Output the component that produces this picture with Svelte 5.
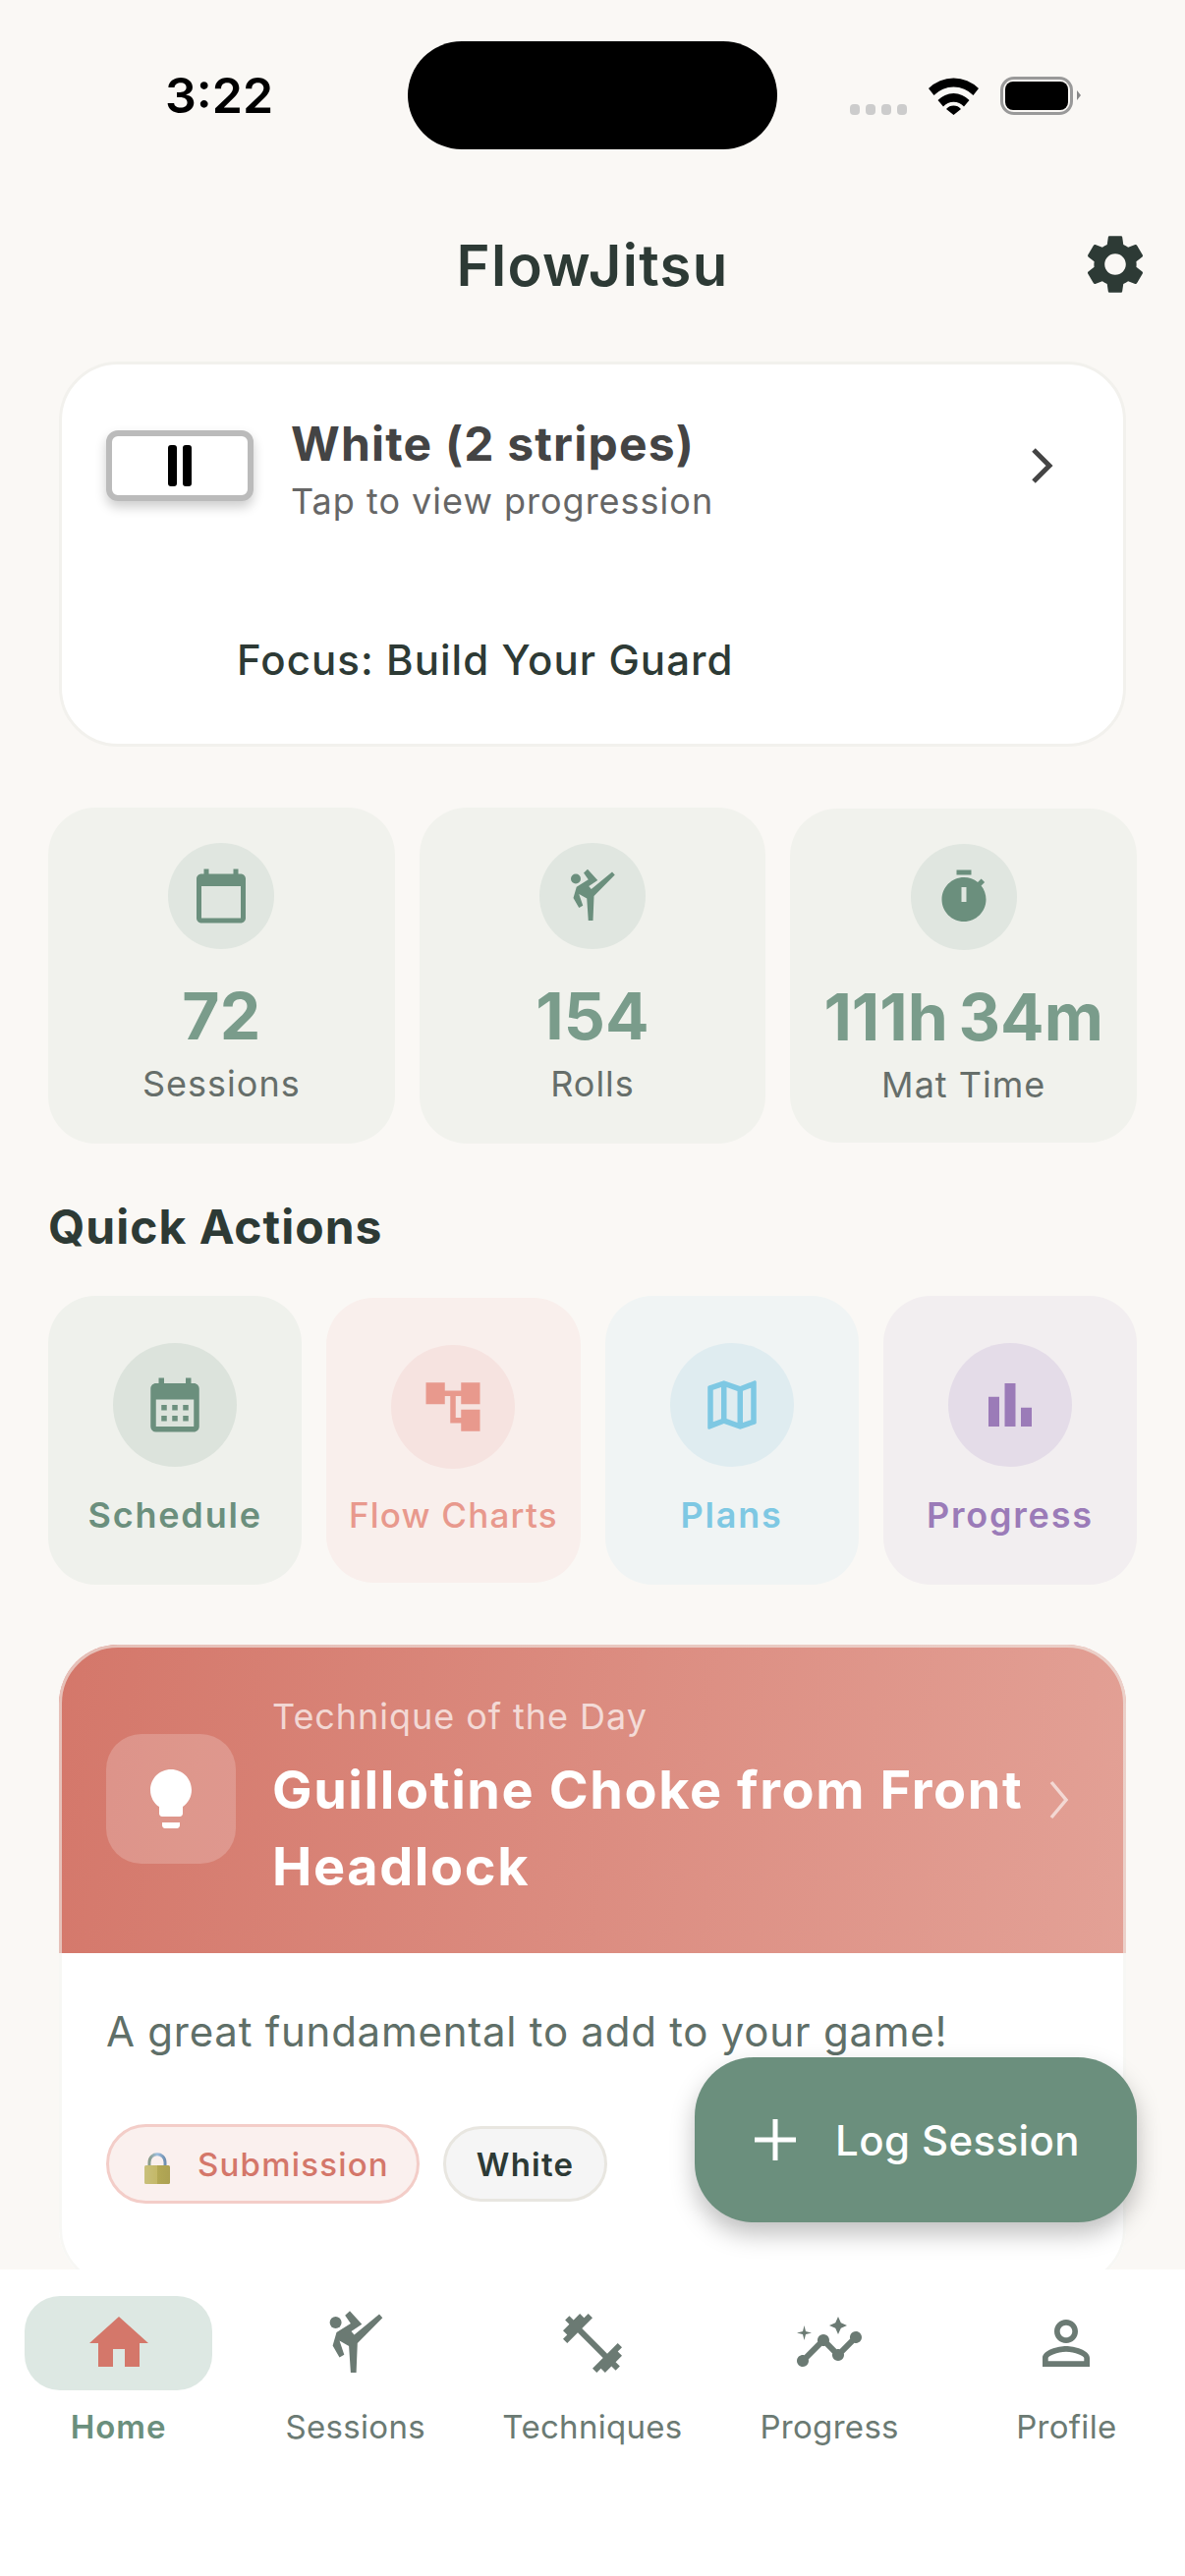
<script lang="ts">
  const stats = [
    { value: '72', label: 'Sessions', icon: 'calendar' },
    { value: '154', label: 'Rolls', icon: 'kick' },
    { value: '111h 34m', label: 'Mat Time', icon: 'timer' },
  ];
  const actions = [
    { label: 'Schedule', tone: 'green', d: 'M19 4h-1V2h-2v2H8V2H6v2H5c-1.11 0-1.99.9-1.99 2L3 20a2 2 0 0 0 2 2h14c1.1 0 2-.9 2-2V6c0-1.1-.9-2-2-2zm0 16H5V10h14v10zM9 14H7v-2h2v2zm4 0h-2v-2h2v2zm4 0h-2v-2h2v2zm-8 4H7v-2h2v2zm4 0h-2v-2h2v2zm4 0h-2v-2h2v2z' },
    { label: 'Flow Charts', tone: 'coral', d: 'M22 11V3h-7v3H9V3H2v8h7V8h2v10h4v3h7v-8h-7v3h-2V8h2v3z' },
    { label: 'Plans', tone: 'blue', d: 'M20.5 3l-.16.03L15 5.1 9 3 3.36 4.9c-.21.07-.36.25-.36.48V20.5c0 .28.22.5.5.5l.16-.03L9 18.9l6 2.1 5.64-1.9c.21-.07.36-.25.36-.48V3.5c0-.28-.22-.5-.5-.5zM10 5.47l4 1.4v11.66l-4-1.4V5.47zm-5 .99l3-1.01v11.7l-3 1.16V6.46zm14 11.08l-3 1.01V6.86l3-1.16v11.84z' },
    { label: 'Progress', tone: 'purple', d: 'M4 9h4v11H4zm12 4h4v7h-4zm-6-9h4v16h-4z' },
  ];
  const tabs = [
    { label: 'Home', active: true, d: 'M10 20v-6h4v6h5v-8h3L12 3 2 12h3v8z' },
    { label: 'Sessions', kick: true },
    { label: 'Techniques', d: 'M20.57 14.86L22 13.43 20.57 12 17 15.57 8.43 7 12 3.43 10.57 2 9.14 3.43 7.71 2 5.57 4.14 4.14 2.71 2.71 4.14l1.43 1.43L2 7.71l1.43 1.43L2 10.57 3.43 12 7 8.43 15.57 17 12 20.57 13.43 22l1.43-1.43L16.29 22l2.14-2.14 1.43 1.43 1.43-1.43-1.43-1.43L22 16.29z' },
    { label: 'Progress', d: 'M21 8c-1.45 0-2.26 1.44-1.93 2.51l-3.55 3.56c-.3-.09-.74-.09-1.04 0l-2.55-2.55C12.27 10.45 11.46 9 10 9c-1.45 0-2.27 1.44-1.93 2.52l-4.56 4.55C2.44 15.74 1 16.55 1 18c0 1.1.9 2 2 2 1.45 0 2.26-1.44 1.93-2.51l4.55-4.56c.3.09.74.09 1.04 0l2.55 2.55C12.73 16.55 13.54 18 15 18c1.45 0 2.27-1.44 1.93-2.52l3.56-3.55c1.07.33 2.51-.48 2.51-1.93 0-1.1-.9-2-2-2zM15 9l.94-2.07L18 6l-2.06-.93L15 3l-.92 2.07L12 6l2.08.93zM3.5 11L4 9l2-.5L4 8l-.5-2L3 8l-2 .5L3 9z' },
    { label: 'Profile', d: 'M12 5.9c1.16 0 2.1.94 2.1 2.1s-.94 2.1-2.1 2.1S9.9 9.16 9.9 8s.94-2.1 2.1-2.1m0 9c2.97 0 6.1 1.46 6.1 2.1v1.1H5.9V17c0-.64 3.13-2.1 6.1-2.1M12 4C9.79 4 8 5.79 8 8s1.79 4 4 4 4-1.79 4-4-1.79-4-4-4zm0 9c-2.67 0-8 1.34-8 4v3h16v-3c0-2.66-5.33-4-8-4z' },
  ];
  const KICK = '20 2.2 21.1 3.4 12.6 12 12.2 22 10.3 22 9.7 13 6.5 11.2 8.1 15.9 6.5 16.8 4.2 12.8 5.5 8.3 10.3 5.3 8.4 2.6 10 1.1 14.1 5.6 10.5 8 11.5 9.2';
</script>

{#snippet kickIcon(size)}
  <svg width={size} height={size} viewBox="0 0 24 24" fill="currentColor">
    <circle cx="5.2" cy="5" r="2" /><polygon points={KICK} />
  </svg>
{/snippet}

<div class="screen">
  <div class="status">
    <span class="time">3:22</span>
    <div class="island"></div>
    <div class="status-right">
      <div class="dots"><i></i><i></i><i></i><i></i></div>
      <svg class="wifi" width="51" height="38" viewBox="0 0 51 38">
        <path d="M0 11 A36 36 0 0 1 51 11 L45.500 18 A28 28 0 0 0 5.500 18Z M9.500 23 A22 22 0 0 1 41.500 23 L36 29.500 A14 14 0 0 0 15 29.500Z M18 32 A10 10 0 0 1 33 32 L25.500 38Z" fill="#000" />
      </svg>
      <div class="battery"><div class="battery-fill"></div></div>
      <div class="battery-cap"></div>
    </div>
  </div>

  <header class="header">
    <h1>FlowJitsu</h1>
    <svg class="gear" width="72" height="72" viewBox="0 0 24 24" fill="#2d3a35">
      <path d="M19.14 12.94c.04-.3.06-.61.06-.94 0-.32-.02-.64-.07-.94l2.03-1.58c.18-.14.23-.41.12-.61l-1.92-3.32c-.12-.22-.37-.29-.59-.22l-2.39.96c-.5-.38-1.03-.7-1.62-.94l-.36-2.54c-.04-.24-.24-.41-.48-.41h-3.84c-.24 0-.43.17-.47.41l-.36 2.54c-.59.24-1.13.57-1.62.94l-2.39-.96c-.22-.08-.47 0-.59.22L2.74 8.87c-.12.21-.08.47.12.61l2.03 1.58c-.05.3-.09.63-.09.94s.02.64.07.94l-2.03 1.58c-.18.14-.23.41-.12.61l1.92 3.32c.12.22.37.29.59.22l2.39-.96c.5.38 1.03.7 1.62.94l.36 2.54c.05.24.24.41.48.41h3.84c.24 0 .44-.17.47-.41l.36-2.54c.59-.24 1.13-.56 1.62-.94l2.39.96c.22.08.47 0 .59-.22l1.92-3.32c.12-.22.07-.47-.12-.61l-2.01-1.58zM12 15.6c-1.98 0-3.6-1.62-3.6-3.6s1.62-3.6 3.6-3.6 3.6 1.62 3.6 3.6-1.62 3.6-3.6 3.6z" />
    </svg>
  </header>

  <main class="content">
    <section class="belt-card">
      <div class="belt-row">
        <div class="belt"><i></i><i></i></div>
        <div class="belt-text">
          <div class="belt-name">White (2 stripes)</div>
          <div class="belt-sub">Tap to view progression</div>
        </div>
        <svg class="belt-chevron" width="36" height="42" viewBox="0 0 36 42" fill="none" stroke="#444" stroke-width="5">
          <path d="M9 5 L25 21 L9 37" />
        </svg>
      </div>
      <div class="focus">Focus: Build Your Guard</div>
    </section>

    <section class="stats">
      {#each stats as s}
        <div class="stat" class:lower={s.icon === 'timer'}>
          <div class="stat-circle">
            {#if s.icon === 'calendar'}
              <svg width="60" height="60" viewBox="0 0 24 24" fill="currentColor"><path d="M20 3h-1V1h-2v2H7V1H5v2H4c-1.100 0-2 .9-2 2v16c0 1.100.9 2 2 2h16c1.100 0 2-.9 2-2V5c0-1.100-.9-2-2-2zm0 18H4V8h16v13z" /></svg>
            {:else if s.icon === 'kick'}
              {@render kickIcon(60)}
            {:else}
              <svg width="60" height="60" viewBox="0 0 24 24" fill="currentColor" fill-rule="evenodd"><path d="M15 1H9v2h6V1zm-4 13h2V8h-2v6zm8.030-6.610l1.420-1.420c-.43-.51-.9-.99-1.410-1.410l-1.420 1.420C16.070 4.740 14.120 4 12 4c-4.970 0-9 4.030-9 9s4.020 9 9 9c4.980 0 9-4.030 9-9 0-2.120-.74-4.070-1.970-5.610z" /></svg>
            {/if}
          </div>
          <div class="stat-value">{s.value}</div>
          <div class="stat-label">{s.label}</div>
        </div>
      {/each}
    </section>

    <h2 class="section-title">Quick Actions</h2>

    <section class="actions">
      {#each actions as a}
        <div class="action {a.tone}">
          <div class="action-circle">
            <svg width="66" height="66" viewBox="0 0 24 24" fill="currentColor"><path d={a.d} /></svg>
          </div>
          <div class="action-label">{a.label}</div>
        </div>
      {/each}
    </section>

    <section class="technique">
      <div class="tech-head">
        <div class="tech-icon">
          <svg width="72" height="72" viewBox="0 0 24 24" fill="#fff"><path d="M9 21c0 .5.4 1 1 1h4c.6 0 1-.5 1-1v-1H9v1zm3-19C8.100 2 5 5.100 5 9c0 2.400 1.200 4.500 3 5.700V17c0 .5.4 1 1 1h6c.6 0 1-.5 1-1v-2.300c1.800-1.300 3-3.400 3-5.700 0-3.900-3.100-7-7-7z" /></svg>
        </div>
        <div class="tech-text">
          <div class="tech-kicker">Technique of the Day</div>
          <div class="tech-title">Guillotine Choke from Front Headlock</div>
        </div>
        <svg class="tech-chevron" width="30" height="42" viewBox="0 0 30 42" fill="none" stroke="#fff" stroke-opacity=".6" stroke-width="3.500">
          <path d="M6 3 L21 21 L6 39" />
        </svg>
      </div>
      <div class="tech-body">
        <p>A great fundamental to add to your game!</p>
        <div class="chips">
          <span class="chip sub">
            <svg class="lock" width="26" height="32" viewBox="0 0 26 32">
              <defs>
                <linearGradient id="shackle" x1="0" y1="0" x2="1" y2="0">
                  <stop offset="0" stop-color="#8a9c8a" />
                  <stop offset=".5" stop-color="#9fc0e0" />
                  <stop offset="1" stop-color="#6f8fb0" />
                </linearGradient>
                <linearGradient id="lockbody" x1="0" y1="0" x2="1" y2="0">
                  <stop offset="0" stop-color="#c9c07c" />
                  <stop offset=".5" stop-color="#c4b868" />
                  <stop offset=".52" stop-color="#b3a855" />
                  <stop offset="1" stop-color="#aca152" />
                </linearGradient>
              </defs>
              <path d="M5 15 V10 C5 -1 21 -1 21 10 V15" fill="none" stroke="url(#shackle)" stroke-width="3" />
              <rect x="0" y="13" width="26" height="19" rx="1.500" fill="url(#lockbody)" />
            </svg>
            Submission
          </span>
          <span class="chip level">White</span>
        </div>
      </div>
    </section>
  </main>

  <button class="fab">
    <svg width="42" height="42" viewBox="0 0 42 42" stroke="#fff" stroke-width="5"><path d="M21 0V42M0 21H42" /></svg>
    <span>Log Session</span>
  </button>

  <nav class="tabbar">
    {#each tabs as t}
      <div class="tab" class:active={t.active}>
        <div class="tab-icon">
          {#if t.kick}
            {@render kickIcon(72)}
          {:else}
            <svg width="72" height="72" viewBox="0 0 24 24" fill="currentColor"><path d={t.d} /></svg>
          {/if}
        </div>
        <div class="tab-label">{t.label}</div>
      </div>
    {/each}
  </nav>
</div>

<style>
:global(body) {
  margin: 0;
  background: #faf8f5;
}
.screen {
  position: relative;
  width: 1206px;
  height: 2622px;
  display: flex;
  flex-direction: column;
  overflow: hidden;
  background: #faf8f5;
  font-family: Inter, 'Liberation Sans', sans-serif;
  color: #2d3a35;
}

.status {
  height: 195px;
  flex-shrink: 0;
  position: relative;
  display: flex;
  box-sizing: border-box;
}
.time {
  position: absolute;
  left: 168px;
  top: 68px;
  font-size: 50px;
  line-height: 58px;
  font-weight: 600;
  color: #000;
}
.island {
  position: absolute;
  left: 415px;
  top: 42px;
  width: 376px;
  height: 110px;
  border-radius: 55px;
  background: #000;
}
.status-right {
  position: absolute;
  left: 865px;
  top: 78px;
  height: 39px;
  display: flex;
  align-items: flex-start;
}
.dots {
  display: flex;
  gap: 6px;
  margin-top: 28px;
}
.dots i {
  width: 10px;
  height: 11px;
  border-radius: 4px;
  background: #ccc;
}
.wifi { margin: 1px 0 0 22px; }
.battery {
  box-sizing: border-box;
  width: 74px;
  height: 39px;
  margin-left: 22px;
  border: 3.500px solid #999;
  border-radius: 14px;
  padding: 2px;
}
.battery-fill {
  height: 100%;
  background: #000;
  border-radius: 8px;
}
.battery-cap {
  width: 0;
  height: 0;
  margin: 14px 0 0 4px;
  border-left: 4px solid #888;
  border-top: 5.500px solid transparent;
  border-bottom: 5.500px solid transparent;
}

.header {
  height: 150px;
  flex-shrink: 0;
  position: relative;
  display: flex;
  align-items: center;
  justify-content: center;
}
.header h1 {
  margin: 0;
  font-size: 58px;
  font-weight: 600;
  letter-spacing: 1.300px;
  color: #2d3a35;
}
.gear {
  position: absolute;
  right: 35px;
  top: 38px;
}

.content {
  flex: 1;
  min-height: 0;
  overflow: hidden;
  padding: 23px 48px 0;
  display: flex;
  flex-direction: column;
}

.belt-card {
  margin: 0 12px;
  height: 392px;
  flex-shrink: 0;
  box-sizing: border-box;
  background: #fff;
  border: 3px solid #f2f1ed;
  border-radius: 60px;
  padding: 67px 45px 0;
}
.belt-row {
  display: flex;
  align-items: flex-start;
}
.belt {
  box-sizing: border-box;
  width: 150px;
  height: 72px;
  flex-shrink: 0;
  background: #fff;
  border: 6px solid #bbb;
  border-radius: 12px;
  box-shadow: 0 6px 12px rgba(0, 0, 0, 0.2);
  display: flex;
  justify-content: center;
  align-items: center;
  gap: 6px;
}
.belt i {
  width: 9px;
  height: 42px;
  border-radius: 3px;
  background: #000;
}
.belt-text {
  margin-left: 38px;
  margin-top: -16px;
  flex: 1;
}
.belt-name {
  font-size: 48px;
  line-height: 60px;
  font-weight: 700;
  letter-spacing: 1.200px;
  color: #444;
}
.belt-sub {
  margin-top: 5px;
  font-size: 36px;
  line-height: 46px;
  letter-spacing: 1px;
  color: #666;
}
.belt-chevron {
  margin: 15px 19px 0 0;
}
.focus {
  margin: 113px 0 0 133px;
  font-size: 42px;
  line-height: 52px;
  font-weight: 500;
  letter-spacing: 1.050px;
  color: #2d3a35;
}

.stats {
  display: flex;
  gap: 25px;
  margin: 62px 1px 0;
  flex-shrink: 0;
}
.stat {
  flex: 1;
  height: 342px;
  box-sizing: border-box;
  background: #f1f2ed;
  border-radius: 48px;
  padding-top: 36px;
  display: flex;
  flex-direction: column;
  align-items: center;
}
.stat.lower {
  height: 340px;
  margin-top: 1px;
}
.stat-circle {
  width: 108px;
  height: 108px;
  border-radius: 54px;
  background: #e0e6e0;
  color: #6b8f7d;
  display: flex;
  align-items: center;
  justify-content: center;
}
.stat-value {
  margin-top: 29px;
  font-size: 66px;
  line-height: 78px;
  font-weight: 700;
  word-spacing: -5px;
  color: #7a9c8b;
  white-space: nowrap;
}
.stat-label {
  margin-top: 8px;
  font-size: 36px;
  line-height: 44px;
  letter-spacing: 1px;
  color: #666e6a;
}

.section-title {
  margin: 55px 0 0 1px;
  font-size: 48px;
  line-height: 60px;
  font-weight: 700;
  letter-spacing: 1px;
  color: #2d3a35;
}

.actions {
  display: flex;
  gap: 25px;
  margin: 40px 1px 0;
  flex-shrink: 0;
}
.action {
  flex: 1;
  height: 294px;
  box-sizing: border-box;
  border-radius: 48px;
  padding-top: 48px;
  display: flex;
  flex-direction: column;
  align-items: center;
}
.action-circle {
  width: 126px;
  height: 126px;
  border-radius: 63px;
  display: flex;
  align-items: center;
  justify-content: center;
}
.action-label {
  margin-top: 26px;
  font-size: 36px;
  line-height: 46px;
  font-weight: 600;
  letter-spacing: 1.800px;
  white-space: nowrap;
}
.action.green { background: #eff1ec; }
.action.green .action-circle { background: #dce3dc; color: #6b8f7d; }
.action.green .action-label { color: #6b8f7d; }
.action.coral {
  background: #f9efec;
  height: 290px;
  margin-top: 2px;
}
.action.coral .action-circle { background: #f6e3e0; color: #e8998d; }
.action.coral .action-label {
  color: #e8998d;
  margin-top: 24px;
  font-size: 35px;
  font-weight: 500;
  letter-spacing: 1.200px;
}
.action.blue { background: #f0f4f4; }
.action.blue .action-circle { background: #dfecf0; color: #7ec8e3; }
.action.blue .action-label { color: #7ec8e3; }
.action.purple { background: #f2eef0; }
.action.purple .action-circle { background: #e4dce8; color: #9b7bb8; }
.action.purple .action-label { color: #9b7bb8; }

.technique {
  position: relative;
  margin: 61px 12px 0;
  flex-shrink: 0;
  background: #fff;
  border-radius: 60px;
  overflow: hidden;
}
.technique::after {
  content: '';
  position: absolute;
  inset: 0;
  box-sizing: border-box;
  border: 3px solid rgba(242, 241, 237, 0.6);
  border-radius: 60px;
  pointer-events: none;
}
.tech-head {
  height: 314px;
  box-sizing: border-box;
  padding: 0 48px;
  display: flex;
  align-items: center;
  background: linear-gradient(100deg, #d4776a 0%, #e3a196 100%);
  position: relative;
}
.tech-icon {
  width: 132px;
  height: 132px;
  flex-shrink: 0;
  border-radius: 36px;
  background: rgba(255, 255, 255, 0.2);
  display: flex;
  align-items: center;
  justify-content: center;
}
.tech-text {
  margin-left: 37px;
  width: 790px;
}
.tech-kicker {
  font-size: 36px;
  line-height: 46px;
  letter-spacing: 0.950px;
  color: rgba(255, 255, 255, 0.7);
}
.tech-title {
  margin-top: 13px;
  font-size: 54px;
  line-height: 78px;
  font-weight: 700;
  letter-spacing: 1.600px;
  color: #fff;
}
.tech-chevron {
  position: absolute;
  right: 52px;
  top: 137px;
}
.tech-body {
  padding: 51px 48px 85px;
}
.tech-body p {
  margin: 0;
  font-size: 42px;
  line-height: 58px;
  letter-spacing: 0.750px;
  color: #5f6f68;
}
.chips {
  display: flex;
  align-items: center;
  gap: 24px;
  margin-top: 65px;
}
.chip {
  box-sizing: border-box;
  display: inline-flex;
  align-items: center;
  border-radius: 42px;
  font-size: 33px;
  letter-spacing: 1.200px;
}
.chip.sub {
  height: 81px;
  padding: 0 28px 0 36px;
  gap: 28px;
  background: #faf0ee;
  border: 3px solid #f3cdc8;
  color: #d4776a;
  font-weight: 500;
}
.lock { margin-top: 9px; }
.chip.level {
  height: 77px;
  padding: 0 31px;
  background: #f5f5f5;
  border: 3px solid #e8e6e0;
  color: #2d3a35;
  font-weight: 600;
}

.fab {
  position: absolute;
  left: 707px;
  top: 2094px;
  width: 450px;
  height: 168px;
  box-sizing: border-box;
  padding: 0 0 0 61px;
  border: none;
  border-radius: 60px;
  background: #6b8f7d;
  box-shadow: 0 12px 24px rgba(0, 0, 0, 0.25);
  color: #fff;
  display: flex;
  align-items: center;
  gap: 40px;
  font-family: inherit;
  font-size: 42px;
  font-weight: 500;
  letter-spacing: 0.400px;
}

.tabbar {
  height: 312px;
  flex-shrink: 0;
  background: #fff;
  display: flex;
  padding-top: 27px;
  box-sizing: border-box;
}
.tab {
  width: 241.200px;
  display: flex;
  flex-direction: column;
  align-items: center;
  color: #6b7a73;
}
.tab-icon {
  width: 191px;
  height: 96px;
  border-radius: 36px;
  display: flex;
  align-items: center;
  justify-content: center;
}
.tab.active .tab-icon {
  background: #dde8e3;
  color: #d4776a;
}
.tab-label {
  margin-top: 16px;
  font-size: 33px;
  line-height: 42px;
  letter-spacing: 0.300px;
}
.tab.active .tab-label {
  color: #6b8f7d;
  font-weight: 600;
  letter-spacing: 1px;
}
</style>
